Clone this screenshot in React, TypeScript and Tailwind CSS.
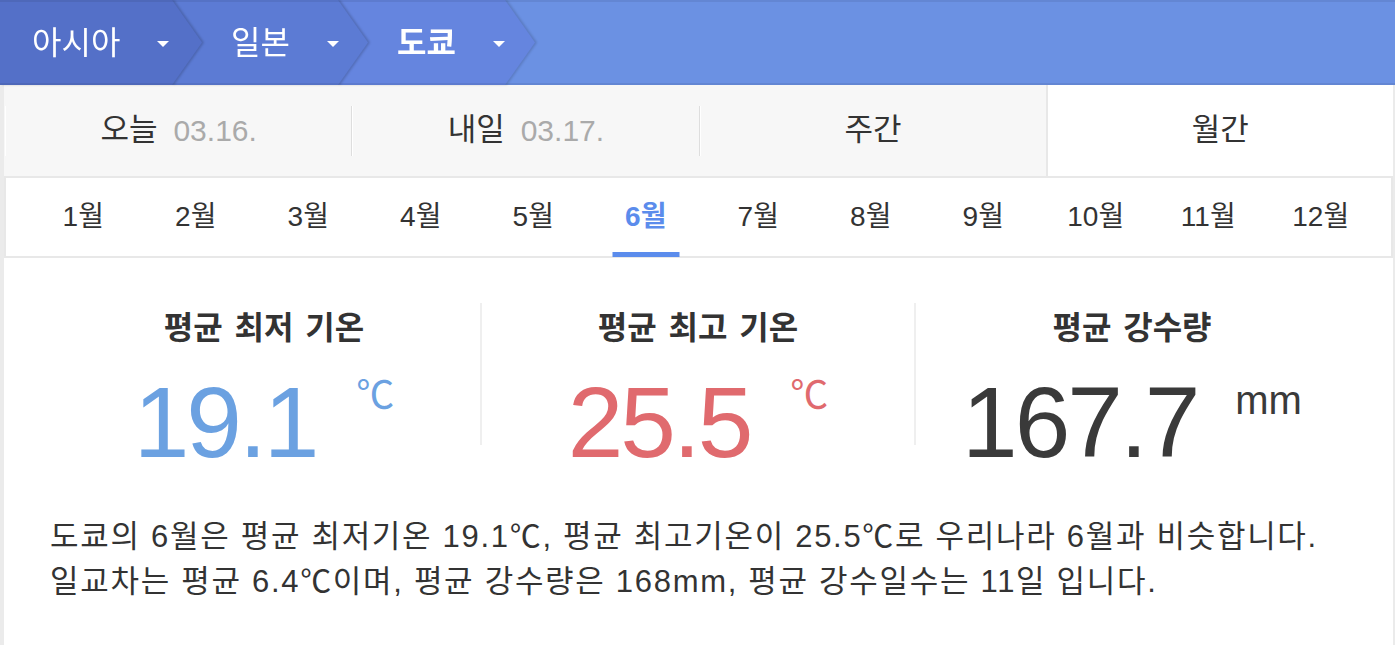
import React from "react";

const months = ["1월", "2월", "3월", "4월", "5월", "6월", "7월", "8월", "9월", "10월", "11월", "12월"];

function Arrow() {
  return <span className="ml-[37px] mt-[3px] inline-block w-0 h-0 border-x-[6px] border-t-[6px] border-x-transparent border-t-white" />;
}

export default function App() {
  return (
    <div className="w-[1395px] h-[645px] overflow-hidden bg-white text-[#333] [font-family:'Liberation_Sans','Noto_Sans_CJK_KR',sans-serif]">
      {/* breadcrumb */}
      <div className="relative flex h-[85px] bg-[#6b91e3]">
        <div className="relative z-30 drop-shadow-[2px_0_1px_rgba(0,0,0,0.18)]">
          <div className="flex items-center h-full w-[202px] pl-[32px] bg-[#5470c8] text-white text-[32px] [clip-path:polygon(0_0,calc(100%_-_30px)_0,100%_50%,calc(100%_-_30px)_100%,0_100%)]">
            <span>아시아</span>
            <Arrow />
          </div>
        </div>
        <div className="relative z-20 ml-[-30px] drop-shadow-[2px_0_1px_rgba(0,0,0,0.18)]">
          <div className="flex items-center h-full w-[196px] pl-[59px] bg-[#5c7bd4] text-white text-[32px] [clip-path:polygon(0_0,calc(100%_-_30px)_0,100%_50%,calc(100%_-_30px)_100%,0_100%)]">
            <span>일본</span>
            <Arrow />
          </div>
        </div>
        <div className="relative z-10 ml-[-30px] drop-shadow-[2px_0_1px_rgba(0,0,0,0.15)]">
          <div className="flex items-center h-full w-[197px] pl-[59px] bg-[#6585df] text-white text-[32px] font-bold [clip-path:polygon(0_0,calc(100%_-_30px)_0,100%_50%,calc(100%_-_30px)_100%,0_100%)]">
            <span>도쿄</span>
            <Arrow />
          </div>
        </div>
        <div className="pointer-events-none absolute inset-x-0 top-0 z-40 h-[2px] bg-black/[0.07]" />
        <div className="pointer-events-none absolute inset-x-0 bottom-0 z-40 h-[2px] bg-black/[0.07]" />
      </div>

      <div className="border-l-4 border-r-2 border-[#ebebeb]">
        {/* tabs */}
        <div className="grid grid-cols-4 h-[93px] border-b-2 border-[#e8e8e8] bg-[#f7f7f7] text-[30px]">
          <div className="flex items-center">
            <span className="w-[2px] h-[50px] border-r border-white" />
            <div className="flex-1 flex justify-center items-center">
              <span className="text-[31px]">오늘</span>
              <span className="ml-[16px] text-[#aaaaaa]">03.16.</span>
            </div>
          </div>
          <div className="flex items-center">
            <span className="w-[2px] h-[50px] border-l border-[#dedede] border-r border-r-white" />
            <div className="flex-1 flex justify-center items-center">
              <span className="text-[31px]">내일</span>
              <span className="ml-[16px] text-[#aaaaaa]">03.17.</span>
            </div>
          </div>
          <div className="flex items-center">
            <span className="w-[2px] h-[50px] border-l border-[#dedede] border-r border-r-white" />
            <div className="flex-1 flex justify-center items-center">
              <span className="text-[31px]">주간</span>
            </div>
          </div>
          <div className="flex items-center justify-center bg-white border-l-2 border-[#e8e8e8]">
            <span className="text-[31px]">월간</span>
          </div>
        </div>

        {/* months */}
        <div className="flex h-[80px] border-2 border-t-0 border-[#e8e8e8] pl-[21px] pr-[14px]">
          {months.map((m) =>
            m === "6월" ? (
              <div key={m} className="relative flex-1 flex items-center justify-center text-[28px] font-bold text-[#5b8cec]">
                <span>{m}</span>
                <span className="absolute bottom-[-1px] left-1/2 -translate-x-1/2 w-[67px] h-[5px] bg-[#5b8cec]" />
              </div>
            ) : (
              <div key={m} className="flex-1 flex items-center justify-center text-[28px]">
                <span>{m}</span>
              </div>
            )
          )}
        </div>

        {/* stats */}
        <div className="flex pl-[44px] pr-[45px] pt-[45px]">
          <div className="flex-1 flex flex-col items-center">
            <div className="h-[50px] flex items-center text-[32px] font-bold [word-spacing:3px]">평균 최저 기온</div>
            <div className="mt-[19px] flex items-start">
              <span className="text-[100px] leading-[100px] tracking-[-3px] text-[#6ba1e1]">19.1</span>
              <span className="ml-[40px] mt-[4px] text-[38px] leading-[38px] text-[#6ba1e1]">℃</span>
            </div>
          </div>
          <div className="w-[2px] h-[142px] bg-[#efefef]" />
          <div className="flex-1 flex flex-col items-center">
            <div className="h-[50px] flex items-center text-[32px] font-bold [word-spacing:3px]">평균 최고 기온</div>
            <div className="mt-[19px] flex items-start">
              <span className="text-[100px] leading-[100px] tracking-[-3px] text-[#e06a6e]">25.5</span>
              <span className="ml-[40px] mt-[4px] text-[38px] leading-[38px] text-[#e06a6e]">℃</span>
            </div>
          </div>
          <div className="w-[2px] h-[142px] bg-[#efefef]" />
          <div className="flex-1 flex flex-col items-center">
            <div className="h-[50px] flex items-center text-[32px] font-bold [word-spacing:3px]">평균 강수량</div>
            <div className="mt-[19px] flex items-start">
              <span className="text-[100px] leading-[100px] tracking-[-3px] text-[#3a3a3a]">167.7</span>
              <span className="ml-[38px] mt-[8px] text-[40px] leading-[40px] text-[#3a3a3a]">mm</span>
            </div>
          </div>
        </div>

        {/* description */}
        <div className="pl-[46px] mt-[42px] text-[31px] leading-[45px] tracking-[1.7px] text-[#333]">
          <p>도쿄의 6월은 평균 최저기온 19.1℃, 평균 최고기온이 25.5℃로 우리나라 6월과 비슷합니다.</p>
          <p>일교차는 평균 6.4℃이며, 평균 강수량은 168mm, 평균 강수일수는 11일 입니다.</p>
        </div>
        <div className="h-[100px]" />
      </div>
    </div>
  );
}
